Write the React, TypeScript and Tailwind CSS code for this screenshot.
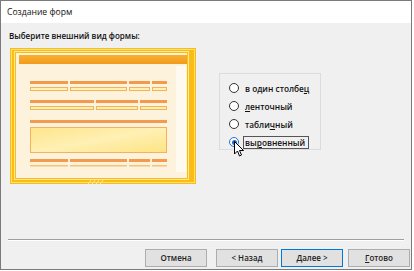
import React from "react";

const font = { fontFamily: '"Open Sans", "Noto Sans", sans-serif' };

function FormPreview() {
  const row1 = [
    [20, 38],
    [60, 57],
    [119, 21],
    [142, 15],
  ];
  const row2 = [
    [20, 64],
    [86, 42],
    [130, 27],
  ];
  return (
    <svg width="186" height="136" viewBox="0 0 186 136">
      <defs>
        <linearGradient id="hdr" x1="0" y1="0" x2="0" y2="1">
          <stop offset="0" stopColor="#f8b030" />
          <stop offset="1" stopColor="#f29a1c" />
        </linearGradient>
        <linearGradient id="big" x1="0" y1="0" x2="1" y2="1">
          <stop offset="0" stopColor="#fde58a" />
          <stop offset="0.5" stopColor="#fff0b4" />
          <stop offset="1" stopColor="#fde483" />
        </linearGradient>
      </defs>
      <rect x="0" y="0" width="186" height="136" fill="#fbbd14" />
      <rect x="1.5" y="1.5" width="183" height="133" fill="none" stroke="#fde27a" strokeWidth="1" />
      <rect x="4.5" y="3.5" width="174" height="128" fill="none" stroke="#fee8a0" strokeWidth="1" />
      <rect x="6" y="5" width="171" height="125" fill="#fdf3dd" />
      <rect x="166" y="18" width="10" height="106" fill="#fffaf0" />
      <rect x="9" y="7" width="168" height="9" fill="url(#hdr)" />
      {row1.map(([x, w], i) => (
        <g key={"a" + i}>
          <rect x={x} y="33" width={w} height="3" fill="#f39a4c" />
          <rect x={x + 0.5} y="39.5" width={w - 1} height="3" fill="#fff2b0" stroke="#f5b25c" strokeWidth="1" />
        </g>
      ))}
      {row2.map(([x, w], i) => (
        <g key={"b" + i}>
          <rect x={x} y="52" width={w} height="3" fill="#f39a4c" />
          <rect x={x + 0.5} y="58.5" width={w - 1} height="3" fill="#fff2b0" stroke="#f5b25c" strokeWidth="1" />
        </g>
      ))}
      <rect x="20" y="72" width="137" height="3" fill="#f39a4c" />
      <rect x="20.5" y="79.5" width="136" height="25" fill="url(#big)" stroke="#f5b25c" strokeWidth="1" />
      {row1.map(([x, w], i) => (
        <g key={"c" + i}>
          <rect x={x} y="111" width={w} height="3" fill="#f39a4c" />
          <rect x={x} y="117" width={w} height="1.5" fill="#f8c27a" />
        </g>
      ))}
      <g stroke="#fde9a8" strokeWidth="1">
        <line x1="78" y1="136" x2="82" y2="131" />
        <line x1="82" y1="136" x2="86" y2="131" />
        <line x1="86" y1="136" x2="90" y2="131" />
        <line x1="90" y1="136" x2="94" y2="131" />
      </g>
    </svg>
  );
}

function Radio({ label, checked }: { label: React.ReactNode; checked?: boolean }) {
  return (
    <div className="flex items-center h-[18px]">
      <span
        className={
          "w-[10px] h-[10px] rounded-full border bg-white flex items-center justify-center " +
          (checked ? "border-[#2a6fc9]" : "border-[#333]")
        }
      >
        {checked && <span className="w-[5px] h-[5px] rounded-full bg-[#1f6fd0]" />}
      </span>
      <span
        className={
          "ml-[4px] text-[8.3px] leading-[11px] font-semibold text-[#111] " +
          (checked ? "border border-[#555] px-[1px] w-[66px]" : "px-[2px]")
        }
      >
        {label}
      </span>
    </div>
  );
}

function Btn({ children, primary }: { children: React.ReactNode; primary?: boolean }) {
  return (
    <button
      className={
        "w-[62px] h-[18px] bg-[#e1e1e1] border text-[8px] font-semibold text-[#222] flex items-center justify-center " +
        (primary ? "border-[#0078d7]" : "border-[#adadad]")
      }
    >
      {children}
    </button>
  );
}

export default function App() {
  return (
    <div className="w-[414px] h-[271px] bg-white" style={font}>
      <div className="w-[412px] h-[270px] border border-[#7a7a7a] flex flex-col">
        <div className="h-[22px] bg-white flex items-center pl-[6px] pt-[1px] text-[8.6px] text-[#111]">
          Создание форм
        </div>
        <div className="flex-1 bg-[#f0f0f0] flex flex-col">
          <div className="pl-[8px] pt-[7px] text-[8px] leading-[11px] font-semibold text-[#111]">
            Выберите внешний вид формы:
          </div>
          <div className="flex pl-[9px] pt-[7px]">
            <FormPreview />
            <div className="relative ml-[23px] mt-[25px] w-[102px] h-[77px] border border-[#dcdcdc] pl-[9px] pt-[5px]">
              <Radio label={<>в один столбе<u>ц</u></>} />
              <Radio label={<><u>л</u>енточный</>} />
              <Radio label={<>табли<u>ч</u>ный</>} />
              <Radio checked label={<>вы<u>р</u>овненный</>} />
              <svg className="absolute left-[14px] top-[67px]" width="11" height="17" viewBox="0 0 11 17">
                <path d="M0.5 0.5 L0.5 13 L3.5 10 L5.5 15 L7.5 14 L5.5 9.5 L9.5 9.5 Z" fill="#fff" stroke="#000" strokeWidth="1" />
              </svg>
            </div>
          </div>
          <div className="mt-auto mx-[7px] border-t border-[#a0a0a0] border-b border-b-white" />
          <div className="flex pt-[8px] pb-[2px] pr-[1px]">
            <div className="ml-auto" />
            <Btn>Отмена</Btn>
            <div className="w-[9px]" />
            <Btn>&lt; Назад</Btn>
            <div className="w-[3px]" />
            <Btn primary>
              <u>Д</u>алее &gt;
            </Btn>
            <div className="w-[5px]" />
            <Btn>
              <u>Г</u>отово
            </Btn>
          </div>
        </div>
      </div>
    </div>
  );
}
